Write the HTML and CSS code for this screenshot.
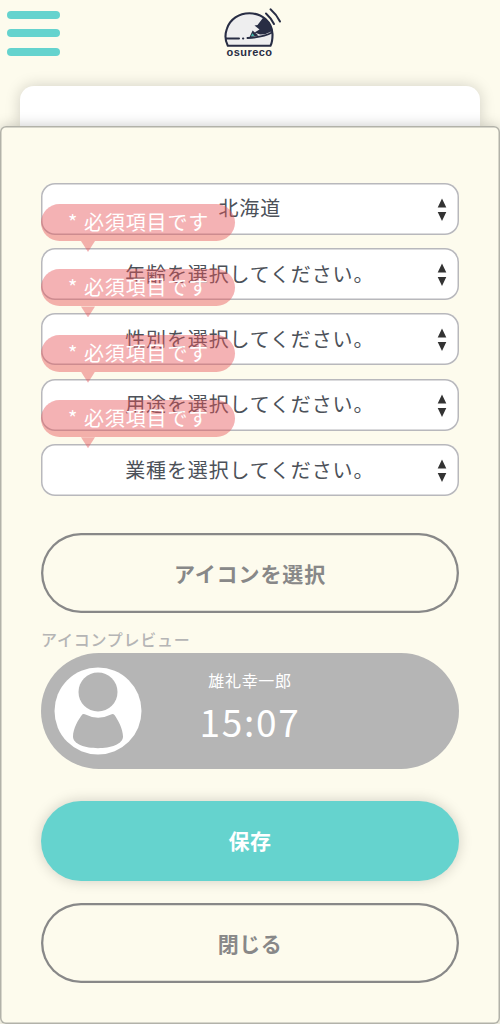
FILE: index.html
```html
<!DOCTYPE html>
<html lang="ja">
<head>
<meta charset="utf-8">
<title>osureco</title>
<link rel="stylesheet" href="styles.css">
</head>
<body>
<div class="page">
  <header class="header">
    <button class="menu" aria-label="メニュー"><span></span><span></span><span></span></button>
    <div class="logo">
      <svg class="logo-mark" viewBox="0 0 64 64" width="64" height="64">
        <path d="M9.800 45.800C7.600 41.500 6.700 35 8.800 29C12 19 21 13.300 31.500 13.300C44 13.300 54 22 54.500 34C54.600 39 54.200 42.500 52.500 45.800Z" fill="#eeeeef" stroke="#282d44" stroke-width="2.100" stroke-linejoin="round"/>
        <path d="M45.500 17.200C50 20.500 53.500 25 54.500 31L47 34.300L42 34.500L36.500 32.500L41.500 29.500L36.500 25.500L39.500 25Z" fill="#282d44"/>
        <path d="M34.600 30.500L31.500 37.300L40.500 35.500Z" fill="#282d44"/>
        <path d="M34.300 33.300L32.800 36.500L36.500 35.700Z" fill="#45b9ad"/>
        <path d="M8.500 38.500H21M25 38.500H25.300M29.500 38C38 37.600 47 36.500 54 32.500" fill="none" stroke="#282d44" stroke-width="2" stroke-linecap="round"/>
        <path d="M48 13.500Q53 18 56 24M52.500 9.300Q58.500 14.500 62 21.500" fill="none" stroke="#282d44" stroke-width="2" stroke-linecap="round"/>
      </svg>
      <span class="logo-text">osureco</span>
    </div>
  </header>
  <div class="card"></div>
  <main class="modal">
    <div class="fields">
      <div class="field"><span class="value">北海道</span>
        <svg class="arrows" viewBox="0 0 10 24"><path d="M5 .5L9.300 9.500H.7ZM.7 14H9.300L5 23Z"/></svg>
        <div class="tip"><span class="star">*</span>必須項目です</div></div>
      <div class="field"><span class="value">年齢を選択してください。</span>
        <svg class="arrows" viewBox="0 0 10 24"><path d="M5 .5L9.300 9.500H.7ZM.7 14H9.300L5 23Z"/></svg>
        <div class="tip"><span class="star">*</span>必須項目です</div></div>
      <div class="field"><span class="value">性別を選択してください。</span>
        <svg class="arrows" viewBox="0 0 10 24"><path d="M5 .5L9.300 9.500H.7ZM.7 14H9.300L5 23Z"/></svg>
        <div class="tip"><span class="star">*</span>必須項目です</div></div>
      <div class="field"><span class="value">用途を選択してください。</span>
        <svg class="arrows" viewBox="0 0 10 24"><path d="M5 .5L9.300 9.500H.7ZM.7 14H9.300L5 23Z"/></svg>
        <div class="tip"><span class="star">*</span>必須項目です</div></div>
      <div class="field"><span class="value">業種を選択してください。</span>
        <svg class="arrows" viewBox="0 0 10 24"><path d="M5 .5L9.300 9.500H.7ZM.7 14H9.300L5 23Z"/></svg></div>
    </div>
    <button class="button choose">アイコンを選択</button>
    <div class="label">アイコンプレビュー</div>
    <div class="preview">
      <svg class="avatar" viewBox="0 0 88 88">
        <circle cx="44" cy="44" r="43.500" fill="#fff"/>
        <circle cx="44" cy="25" r="19.500" fill="#b5b5b5"/>
        <path d="M28.500 47.300Q30 46.500 31.500 47.500Q44 54 57 47.500Q59 46.300 60.500 48C64 53 69 62 69 69.500C69 85 19 85 19 69.500C19 62 24.500 52 28.500 47.300Z" fill="#b5b5b5"/>
      </svg>
      <div class="info"><div class="name">雄礼幸一郎</div><div class="time">15:07</div></div>
    </div>
    <button class="button save">保存</button>
    <button class="button close">閉じる</button>
  </main>
</div>
</body>
</html>
```
FILE: styles.css
```css
* { box-sizing: border-box; }
body {
  margin: 0;
  background: #fdfbed;
  font-family: "Noto Sans CJK JP", sans-serif;
}
.page {
  height: 1024px;
  display: flex;
  flex-direction: column;
  overflow: hidden;
}
.header {
  height: 86px;
  flex: none;
  display: grid;
  grid-template-columns: 1fr 64px 1fr;
}
.menu {
  display: flex;
  flex-direction: column;
  gap: 10.5px;
  width: 60px;
  padding: 10.500px 0 0 7px;
  border: 0;
  background: none;
}
.menu span {
  height: 8px;
  border-radius: 4px;
  background: #65d3ce;
}
.logo {
  position: relative;
  height: 64px;
}
.logo-mark {
  display: block;
}
.logo-text {
  position: absolute;
  left: 8.500px;
  top: 45px;
  font: bold 11px/14px "Liberation Sans", sans-serif;
  letter-spacing: .45px;
  color: #282d44;
}
.card {
  flex: none;
  height: 40px;
  margin: 0 20px;
  border-radius: 14px 14px 0 0;
  background: #fff;
  box-shadow: 0 0 15px rgba(0, 0, 0, .18);
}
.modal {
  position: relative;
  flex: none;
  height: 898px;
  margin-top: -.5px;
  padding: 57px 41px 0;
  border-radius: 6px;
  background: #fdfbed;
  box-shadow: inset 0 0 0 1.500px #b2b2a9, 0 0 14px rgba(0, 0, 0, .22);
}
.fields {
  display: grid;
  grid-auto-rows: 52px;
  gap: 13.400px;
}
.field {
  position: relative;
  display: flex;
  align-items: center;
  justify-content: center;
  border-radius: 14px;
  background: #fff;
  box-shadow: inset 0 0 0 1.500px #b8b8bc;
  color: #4c5159;
  font-size: 20px;
  letter-spacing: .85px;
}
.value {
  margin: -1.500px 0 0 -.5px;
}
.arrows {
  position: absolute;
  right: 12px;
  top: 15px;
  width: 10px;
  height: 24px;
  fill: #333;
}
.tip {
  position: absolute;
  z-index: 1;
  left: 0;
  top: 21.500px;
  width: 194px;
  height: 37px;
  padding-left: 27px;
  border-radius: 19px;
  background: rgba(230, 84, 88, .45);
  color: #fff;
  font-size: 20px;
  line-height: 35px;
  letter-spacing: .85px;
  white-space: nowrap;
}
.star {
  display: inline-block;
  width: 16px;
}
.tip::after {
  content: "";
  position: absolute;
  left: 40px;
  top: 100%;
  width: 14px;
  height: 11px;
  background: rgba(230, 84, 88, .45);
  clip-path: polygon(0 0, 100% 0, 50% 100%);
}
.button {
  display: block;
  width: 100%;
  height: 80px;
  padding: 0 0 1px;
  border: 0;
  border-radius: 40px;
  background: none;
  box-shadow: inset 0 0 0 2.300px #888;
  color: #888;
  font: bold 21px "Noto Sans CJK JP", sans-serif;
  letter-spacing: .9px;
}
.choose {
  margin-top: 37px;
}
.label {
  height: 40px;
  padding-top: 14px;
  color: #b5b5b5;
  font-size: 16px;
  font-weight: 500;
  line-height: 25px;
  letter-spacing: .75px;
}
.preview {
  position: relative;
  display: flex;
  justify-content: center;
  height: 116px;
  border-radius: 58px;
  background: #b5b5b5;
  color: #fff;
}
.avatar {
  position: absolute;
  left: 13px;
  top: 14px;
  width: 88px;
  height: 88px;
}
.info {
  padding-top: 15px;
  text-align: center;
}
.name {
  font-size: 16px;
  line-height: 24px;
  letter-spacing: .7px;
}
.time {
  font-size: 37px;
  font-weight: 400;
  line-height: 59px;
  letter-spacing: 1.700px;
}
.save {
  margin-top: 32px;
  padding-bottom: 3px;
  background: #65d3ce;
  color: #fff;
  letter-spacing: .5px;
  box-shadow: 0 0 14px rgba(0, 0, 0, .18);
}
.close {
  margin-top: 22px;
  letter-spacing: .5px;
}
```
